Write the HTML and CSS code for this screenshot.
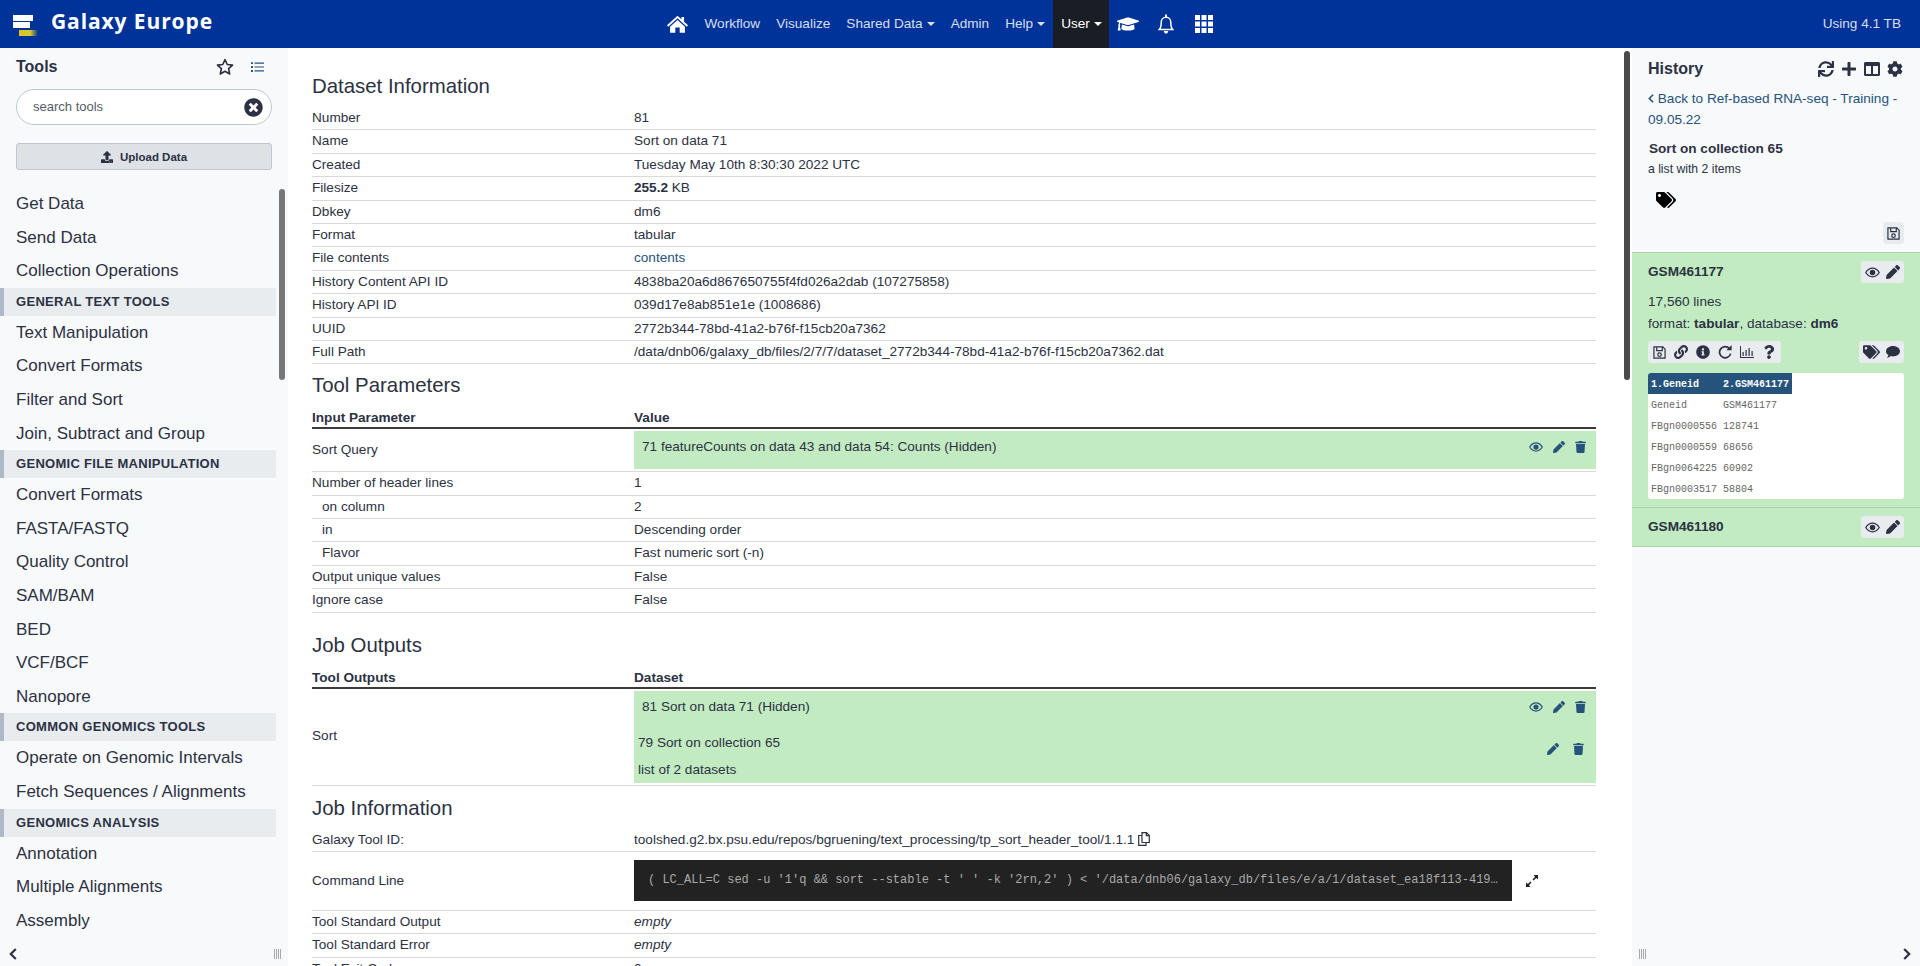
FILE: index.html
```html
<!DOCTYPE html>
<html lang="en">

<head>
    <meta charset="UTF-8">
    <meta name="viewport" content="width=device-width, initial-scale=1.0">
    <title>Galaxy Europe</title>
    <link rel="stylesheet" href="styles.css">
</head>

<body>
    <svg class="sprites" aria-hidden="true">
        <symbol id="i-home" viewBox="0 0 24 20"><path d="M12 0.5 L16.5 4.6 V2 H19.5 V7.3 L24 11.4 L22.6 13 L12 3.5 L1.4 13 L0 11.4 Z M12 5.4 L20.5 13 V20 H14.5 V14 H9.5 V20 H3.5 V13 Z"/></symbol>
        <symbol id="i-cap" viewBox="0 0 640 512"><path d="M622.34 153.2L343.4 67.5c-15.2-4.67-31.6-4.67-46.79 0L17.66 153.2c-23.54 7.23-23.54 38.36 0 45.59l48.63 14.94c-10.67 13.19-17.23 29.28-17.88 46.9C38.78 266.15 32 276.11 32 288c0 10.78 5.68 19.85 13.86 25.65L20.33 428.53C18.11 438.52 25.71 448 35.94 448h56.11c10.24 0 17.84-9.48 15.62-19.47L82.14 313.65C90.32 307.85 96 298.78 96 288c0-11.57-6.47-21.25-15.66-26.87.76-15.02 8.44-28.3 20.69-36.72L296.6 284.5c9.06 2.78 26.44 6.25 46.79 0l278.95-85.7c23.55-7.24 23.55-38.36 0-45.6zM352.79 315.09c-28.53 8.76-52.84 3.92-65.59 0l-145.02-44.55L128 384c0 35.35 85.96 64 192 64s192-28.65 192-64l-14.18-113.47-145.03 44.56z"/></symbol>
        <symbol id="i-bell" viewBox="0 0 16 20"><path fill="none" stroke="currentColor" stroke-width="1.5" d="M1.2 15.6 C3.2 13.6 3.2 11 3.2 8.4 C3.2 5.4 5.2 3.2 8 3.2 C10.8 3.2 12.8 5.4 12.8 8.4 C12.8 11 12.8 13.6 14.8 15.6 Z"/><path d="M7 0.5 H9 V3.5 H7 Z M5.8 17 H10.2 C10.2 18.5 9.2 19.6 8 19.6 C6.8 19.6 5.8 18.5 5.8 17 Z"/></symbol>
        <symbol id="i-grid" viewBox="0 0 18 18"><path d="M0 0H5V5H0Z M6.5 0H11.5V5H6.5Z M13 0H18V5H13Z M0 6.5H5V11.5H0Z M6.5 6.5H11.5V11.5H6.5Z M13 6.5H18V11.5H13Z M0 13H5V18H0Z M6.5 13H11.5V18H6.5Z M13 13H18V18H13Z"/></symbol>
        <symbol id="i-star" viewBox="0 0 20 20"><path fill="none" stroke="currentColor" stroke-width="1.8" stroke-linejoin="round" d="M10 1.8 L12.5 7.2 L18.4 7.9 L14 11.9 L15.2 17.8 L10 14.8 L4.8 17.8 L6 11.9 L1.6 7.9 L7.5 7.2 Z"/></symbol>
        <symbol id="i-list" viewBox="0 0 16 14"><path d="M0 1H2.4V3.4H0Z M0 5.8H2.4V8.2H0Z M0 10.6H2.4V13H0Z M4.4 1.5H16V2.9H4.4Z M4.4 6.3H16V7.7H4.4Z M4.4 11.1H16V12.5H4.4Z"/></symbol>
        <symbol id="i-times" viewBox="0 0 512 512"><path d="M256 8C119 8 8 119 8 256s111 248 248 248 248-111 248-248S393 8 256 8zm121.6 313.1c4.7 4.7 4.7 12.3 0 17L338 377.6c-4.7 4.7-12.3 4.7-17 0L256 312l-65.1 65.6c-4.7 4.7-12.3 4.7-17 0L134.4 338c-4.7-4.7-4.7-12.3 0-17l65.6-65-65.6-65.1c-4.7-4.7-4.7-12.3 0-17l39.6-39.6c4.7-4.7 12.3-4.7 17 0l65 65.7 65.1-65.6c4.7-4.7 12.3-4.7 17 0l39.6 39.6c4.7 4.7 4.7 12.3 0 17L312 256l65.6 65.1z"/></symbol>
        <symbol id="i-upload" viewBox="0 0 512 512"><path d="M296 384h-80c-13.3 0-24-10.7-24-24V192h-87.7c-17.8 0-26.7-21.5-14.1-34.1L242.3 5.7c7.5-7.5 19.8-7.5 27.3 0l152.2 152.2c12.6 12.6 3.7 34.1-14.1 34.1H320v168c0 13.3-10.7 24-24 24zm216-8v112c0 13.3-10.7 24-24 24H24c-13.3 0-24-10.7-24-24V376c0-13.3 10.7-24 24-24h136v8c0 30.9 25.1 56 56 56h80c30.9 0 56-25.1 56-56v-8h136c13.3 0 24 10.7 24 24zm-124 88c0-11-9-20-20-20s-20 9-20 20 9 20 20 20 20-9 20-20zm64 0c0-11-9-20-20-20s-20 9-20 20 9 20 20 20 20-9 20-20z"/></symbol>
        <symbol id="i-eye" viewBox="0 0 20 14"><path fill="none" stroke="currentColor" stroke-width="1.7" d="M1 7 C3.4 3.2 6.5 1.2 10 1.2 C13.5 1.2 16.6 3.2 19 7 C16.6 10.8 13.5 12.8 10 12.8 C6.5 12.8 3.4 10.8 1 7 Z"/><circle cx="10" cy="7" r="3.7"/></symbol>
        <symbol id="i-pencil" viewBox="0 0 512 512"><path d="M497.9 142.1l-46.1 46.1c-4.7 4.7-12.3 4.7-17 0l-111-111c-4.7-4.7-4.7-12.3 0-17l46.1-46.1c18.7-18.7 49.1-18.7 67.9 0l60.1 60.1c18.8 18.7 18.8 49.1 0 67.9zM284.2 99.8L21.6 362.4.4 483.9c-2.9 16.4 11.4 30.6 27.8 27.8l121.5-21.3 262.6-262.6c4.7-4.7 4.7-12.3 0-17l-111-111c-4.8-4.7-12.4-4.7-17.1 0z"/></symbol>
        <symbol id="i-trash" viewBox="0 0 448 512"><path d="M432 32H312l-9.4-18.7A24 24 0 0 0 281.1 0H166.8a23.72 23.72 0 0 0-21.4 13.3L136 32H16A16 16 0 0 0 0 48v32a16 16 0 0 0 16 16h416a16 16 0 0 0 16-16V48a16 16 0 0 0-16-16zM53.2 467a48 48 0 0 0 47.9 45h245.8a48 48 0 0 0 47.9-45L416 128H32z"/></symbol>
        <symbol id="i-sync" viewBox="0 0 512 512"><path d="M440.65 12.57l4 82.77A247.16 247.16 0 0 0 255.83 8C134.73 8 33.91 94.92 12.29 209.82A12 12 0 0 0 24.09 224h49.05a12 12 0 0 0 11.67-9.26 175.91 175.91 0 0 1 317-56.94l-101.46-4.86a12 12 0 0 0-12.57 12v47.41a12 12 0 0 0 12 12H500a12 12 0 0 0 12-12V12a12 12 0 0 0-12-12h-47.37a12 12 0 0 0-11.98 12.57zM255.83 432a175.61 175.61 0 0 1-146-77.8l101.8 4.87a12 12 0 0 0 12.57-12v-47.4a12 12 0 0 0-12-12H12a12 12 0 0 0-12 12V500a12 12 0 0 0 12 12h47.35a12 12 0 0 0 12-12.6l-4.15-82.57A247.17 247.17 0 0 0 255.83 504c121.11 0 221.93-86.92 243.55-201.82a12 12 0 0 0-11.8-14.18h-49.05a12 12 0 0 0-11.67 9.26A175.86 175.86 0 0 1 255.83 432z"/></symbol>
        <symbol id="i-plus" viewBox="0 0 448 512"><path d="M416 208H272V64c0-17.67-14.33-32-32-32h-32c-17.67 0-32 14.33-32 32v144H32c-17.67 0-32 14.33-32 32v32c0 17.67 14.33 32 32 32h144v144c0 17.67 14.33 32 32 32h32c17.67 0 32-14.33 32-32V304h144c17.67 0 32-14.33 32-32v-32c0-17.67-14.33-32-32-32z"/></symbol>
        <symbol id="i-columns" viewBox="0 0 16 14"><path d="M1.5 0H14.5C15.3 0 16 .7 16 1.5V12.5C16 13.3 15.3 14 14.5 14H1.5C.7 14 0 13.3 0 12.5V1.5C0 .7 .7 0 1.5 0Z M2 4V12H7V4Z M9 4V12H14V4Z" fill-rule="evenodd"/></symbol>
        <symbol id="i-cog" viewBox="0 0 512 512"><path d="M487.4 315.7l-42.6-24.6c4.3-23.2 4.3-47 0-70.2l42.6-24.6c4.9-2.8 7.1-8.6 5.5-14-11.1-35.6-30-67.8-54.7-94.6-3.8-4.1-10-5.1-14.8-2.3L380.8 110c-17.9-15.4-38.5-27.3-60.8-35.1V25.8c0-5.6-3.9-10.5-9.4-11.7-36.7-8.2-74.3-7.8-109.2 0-5.5 1.2-9.4 6.1-9.4 11.7V75c-22.2 7.9-42.8 19.8-60.8 35.1L88.7 85.5c-4.9-2.8-11-1.9-14.8 2.3-24.7 26.7-43.6 58.9-54.7 94.6-1.7 5.4.6 11.2 5.5 14L67.3 221c-4.3 23.2-4.3 47 0 70.2l-42.6 24.6c-4.9 2.8-7.1 8.6-5.5 14 11.1 35.6 30 67.8 54.7 94.6 3.8 4.1 10 5.1 14.8 2.3l42.6-24.6c17.9 15.4 38.5 27.3 60.8 35.1v49.2c0 5.6 3.9 10.5 9.4 11.7 36.7 8.2 74.3 7.8 109.2 0 5.5-1.2 9.4-6.1 9.4-11.7v-49.2c22.2-7.9 42.8-19.8 60.8-35.1l42.6 24.6c4.9 2.8 11 1.9 14.8-2.3 24.7-26.7 43.6-58.9 54.7-94.6 1.5-5.5-.7-11.3-5.6-14.1zM256 336c-44.1 0-80-35.9-80-80s35.9-80 80-80 80 35.9 80 80-35.9 80-80 80z"/></symbol>
        <symbol id="i-tags" viewBox="0 0 640 512"><path d="M497.941 225.941L286.059 14.059A48 48 0 0 0 252.118 0H48C21.49 0 0 21.49 0 48v204.118a48 48 0 0 0 14.059 33.941l211.882 211.882c18.744 18.745 49.136 18.746 67.882 0l204.118-204.118c18.745-18.745 18.745-49.137 0-67.882zM112 160c-26.51 0-48-21.49-48-48s21.49-48 48-48 48 21.49 48 48-21.49 48-48 48zm513.941 133.823L421.823 497.941c-18.745 18.745-49.137 18.745-67.882 0l-.36-.36L527.64 323.522c16.999-16.999 26.36-39.6 26.36-63.64s-9.362-46.641-26.36-63.64L331.397 0h48.721a48 48 0 0 1 33.941 14.059l211.882 211.882c18.745 18.745 18.745 49.137 0 67.882z"/></symbol>
        <symbol id="i-save" viewBox="0 0 14 14"><path fill="none" stroke="currentColor" stroke-width="1.3" d="M1 1 H10.6 L13 3.4 V13 H1 Z M4 1 V5 H10 V1"/><circle cx="7" cy="9.4" r="1.9" fill="none" stroke="currentColor" stroke-width="1.3"/></symbol>
        <symbol id="i-link" viewBox="0 0 512 512"><path d="M326.612 185.391c59.747 59.809 58.927 155.698.36 214.59-.11.12-.24.25-.36.37l-67.2 67.2c-59.27 59.27-155.699 59.262-214.96 0-59.27-59.26-59.27-155.7 0-214.96l37.106-37.106c9.84-9.84 26.786-3.3 27.294 10.606.648 17.722 3.826 35.527 9.69 52.721 1.986 5.822.567 12.262-3.783 16.612l-13.087 13.087c-28.026 28.026-28.905 73.66-1.155 101.96 28.024 28.579 74.086 28.749 102.325.51l67.2-67.19c28.191-28.191 28.073-73.757 0-101.83-3.701-3.694-7.429-6.564-10.341-8.569a16.037 16.037 0 0 1-6.947-12.606c-.396-10.567 3.348-21.456 11.698-29.806l21.054-21.055c5.521-5.521 14.182-6.199 20.584-1.731a152.482 152.482 0 0 1 20.522 17.197zM467.547 44.449c-59.261-59.262-155.69-59.27-214.96 0l-67.2 67.2c-.12.12-.25.25-.36.37-58.566 58.892-59.387 154.781.36 214.59a152.454 152.454 0 0 0 20.521 17.196c6.402 4.468 15.064 3.789 20.584-1.731l21.054-21.055c8.35-8.35 12.094-19.239 11.698-29.806a16.037 16.037 0 0 0-6.947-12.606c-2.912-2.005-6.64-4.875-10.341-8.569-28.073-28.073-28.191-73.639 0-101.83l67.2-67.19c28.239-28.239 74.3-28.069 102.325.51 27.75 28.3 26.872 73.934-1.155 101.96l-13.087 13.087c-4.35 4.35-5.769 10.79-3.783 16.612 5.864 17.194 9.042 34.999 9.69 52.721.509 13.906 17.454 20.446 27.294 10.606l37.106-37.106c59.271-59.259 59.271-155.699.001-214.959z"/></symbol>
        <symbol id="i-info" viewBox="0 0 512 512"><path d="M256 8C119.043 8 8 119.083 8 256c0 136.997 111.043 248 248 248s248-111.003 248-248C504 119.083 392.957 8 256 8zm0 110c23.196 0 42 18.804 42 42s-18.804 42-42 42-42-18.804-42-42 18.804-42 42-42zm56 254c0 6.627-5.373 12-12 12h-88c-6.627 0-12-5.373-12-12v-24c0-6.627 5.373-12 12-12h12v-64h-12c-6.627 0-12-5.373-12-12v-24c0-6.627 5.373-12 12-12h64c6.627 0 12 5.373 12 12v100h12c6.627 0 12 5.373 12 12v24z"/></symbol>
        <symbol id="i-redo" viewBox="0 0 14 14"><path fill="none" stroke="currentColor" stroke-width="1.7" d="M11.4 3.6 A5.6 5.6 0 1 0 12.6 8.6"/><path d="M8.4 5.2 H13.6 V0 Z"/></symbol>
        <symbol id="i-chart" viewBox="0 0 14 12"><path d="M0 0H1V11H14V12H0Z M2.5 6H3.7V10H2.5Z M5.5 4H6.7V10H5.5Z M8.5 2H9.7V10H8.5Z M11.5 5H12.7V10H11.5Z"/></symbol>
        <symbol id="i-question" viewBox="0 0 384 512"><path d="M202.021 0C122.202 0 70.503 32.703 29.914 91.026c-7.363 10.58-5.093 25.086 5.178 32.874l43.138 32.709c10.373 7.865 25.132 6.026 33.253-4.148 25.049-31.381 43.63-49.449 82.757-49.449 30.764 0 68.816 19.799 68.816 49.631 0 22.552-18.617 34.134-48.993 51.164-35.423 19.86-82.299 44.576-82.299 106.405V320c0 13.255 10.745 24 24 24h72.471c13.255 0 24-10.745 24-24v-5.773c0-42.86 125.268-44.645 125.268-160.627C377.504 66.256 286.902 0 202.021 0zM192 373.459c-38.196 0-69.271 31.075-69.271 69.271 0 38.195 31.075 69.27 69.271 69.27s69.271-31.075 69.271-69.271-31.075-69.27-69.271-69.27z"/></symbol>
        <symbol id="i-comment" viewBox="0 0 14 12"><path d="M7 0C10.9 0 14 2.3 14 5.2C14 8.1 10.9 10.4 7 10.4C6.2 10.4 5.4 10.3 4.7 10.1C3.7 11 2.4 11.7 .8 11.9C1.6 11 2.2 10 2.4 9.1C.9 8.1 0 6.8 0 5.2C0 2.3 3.1 0 7 0Z"/></symbol>
        <symbol id="i-copy" viewBox="0 0 12 14"><path fill="none" stroke="currentColor" stroke-width="1.2" d="M4 .7 H8.5 L11.3 3.5 V10.5 H4 Z M8.3 .7 V3.7 H11.3 M4 3.5 H.7 V13.3 H8 V10.5"/></symbol>
        <symbol id="i-expand" viewBox="0 0 12 12"><path d="M7.5 0H12V4.5L10.2 2.9L7.6 5.5L6.5 4.4L9.1 1.8Z M4.5 12H0V7.5L1.8 9.1L4.4 6.5L5.5 7.6L2.9 10.2Z"/></symbol>
        <symbol id="i-left" viewBox="0 0 8 12"><path fill="none" stroke="currentColor" stroke-width="2.2" d="M6.8 1 L1.8 6 L6.8 11"/></symbol>
        <symbol id="i-right" viewBox="0 0 8 12"><path fill="none" stroke="currentColor" stroke-width="2.2" d="M1.2 1 L6.2 6 L1.2 11"/></symbol>
    </svg>

    <header class="masthead">
        <a class="brand" href="#">
            <span class="logo"><span class="logo-a"></span><span class="logo-b"></span><span class="logo-c"></span></span>
            <span class="brand-name">Galaxy Europe</span>
        </a>
        <nav class="nav">
            <a class="nav-home" href="#"><svg class="ic-home"><use href="#i-home"/></svg></a>
            <a href="#">Workflow</a>
            <a href="#">Visualize</a>
            <a class="caret" href="#">Shared Data</a>
            <a href="#">Admin</a>
            <a class="caret" href="#">Help</a>
            <a class="caret active" href="#">User</a>
            <a class="nav-icon" href="#"><svg class="ic-cap"><use href="#i-cap"/></svg></a>
            <a class="nav-icon" href="#"><svg class="ic-bell"><use href="#i-bell"/></svg></a>
            <a class="nav-icon" href="#"><svg class="ic-grid"><use href="#i-grid"/></svg></a>
        </nav>
        <div class="quota">Using 4.1 TB</div>
    </header>

    <div class="layout">
        <aside class="tools">
            <div class="tools-head">
                <span class="tools-title">Tools</span>
                <span class="tools-actions">
                    <svg class="ic-star"><use href="#i-star"/></svg>
                    <svg class="ic-list"><use href="#i-list"/></svg>
                </span>
            </div>
            <div class="search">
                <span>search tools</span>
                <svg class="ic-times"><use href="#i-times"/></svg>
            </div>
            <button class="upload"><svg class="ic-upload"><use href="#i-upload"/></svg>Upload Data</button>
            <ul class="tool-list">
                <li>Get Data</li>
                <li>Send Data</li>
                <li>Collection Operations</li>
                <li class="section">General Text Tools</li>
                <li>Text Manipulation</li>
                <li>Convert Formats</li>
                <li>Filter and Sort</li>
                <li>Join, Subtract and Group</li>
                <li class="section">Genomic File Manipulation</li>
                <li>Convert Formats</li>
                <li>FASTA/FASTQ</li>
                <li>Quality Control</li>
                <li>SAM/BAM</li>
                <li>BED</li>
                <li>VCF/BCF</li>
                <li>Nanopore</li>
                <li class="section">Common Genomics Tools</li>
                <li>Operate on Genomic Intervals</li>
                <li>Fetch Sequences / Alignments</li>
                <li class="section">Genomics Analysis</li>
                <li>Annotation</li>
                <li>Multiple Alignments</li>
                <li>Assembly</li>
            </ul>
            <div class="scroll-thumb tools-thumb"></div>
            <div class="panel-foot">
                <svg class="ic-chev"><use href="#i-left"/></svg>
                <span class="drag"></span>
            </div>
        </aside>

        <main class="center">
            <h3>Dataset Information</h3>
            <table class="info">
                <tr><td>Number</td><td>81</td></tr>
                <tr><td>Name</td><td>Sort on data 71</td></tr>
                <tr><td>Created</td><td>Tuesday May 10th 8:30:30 2022 UTC</td></tr>
                <tr><td>Filesize</td><td><b>255.2</b> KB</td></tr>
                <tr><td>Dbkey</td><td>dm6</td></tr>
                <tr><td>Format</td><td>tabular</td></tr>
                <tr><td>File contents</td><td><a href="#">contents</a></td></tr>
                <tr><td>History Content API ID</td><td>4838ba20a6d867650755f4fd026a2dab (107275858)</td></tr>
                <tr><td>History API ID</td><td>039d17e8ab851e1e (1008686)</td></tr>
                <tr><td>UUID</td><td>2772b344-78bd-41a2-b76f-f15cb20a7362</td></tr>
                <tr><td>Full Path</td><td>/data/dnb06/galaxy_db/files/2/7/7/dataset_2772b344-78bd-41a2-b76f-f15cb20a7362.dat</td></tr>
            </table>

            <h3>Tool Parameters</h3>
            <table class="info">
                <thead><tr><th>Input Parameter</th><th>Value</th></tr></thead>
                <tr>
                    <td>Sort Query</td>
                    <td class="cell-green">
                        <div class="green-box query-box">
                            <span>71 featureCounts on data 43 and data 54: Counts (Hidden)</span>
                            <span class="row-icons">
                                <svg class="ic-eye"><use href="#i-eye"/></svg>
                                <svg class="ic-pencil"><use href="#i-pencil"/></svg>
                                <svg class="ic-trash"><use href="#i-trash"/></svg>
                            </span>
                        </div>
                    </td>
                </tr>
                <tr><td>Number of header lines</td><td>1</td></tr>
                <tr><td class="indent">on column</td><td>2</td></tr>
                <tr><td class="indent">in</td><td>Descending order</td></tr>
                <tr><td class="indent">Flavor</td><td>Fast numeric sort (-n)</td></tr>
                <tr><td>Output unique values</td><td>False</td></tr>
                <tr><td>Ignore case</td><td>False</td></tr>
            </table>

            <h3 class="gap-top">Job Outputs</h3>
            <table class="info">
                <thead><tr><th>Tool Outputs</th><th>Dataset</th></tr></thead>
                <tr>
                    <td>Sort</td>
                    <td class="cell-green">
                        <div class="green-box outputs-box">
                            <div class="output-row">
                                <span>81 Sort on data 71 (Hidden)</span>
                                <span class="row-icons">
                                    <svg class="ic-eye"><use href="#i-eye"/></svg>
                                    <svg class="ic-pencil"><use href="#i-pencil"/></svg>
                                    <svg class="ic-trash"><use href="#i-trash"/></svg>
                                </span>
                            </div>
                            <div class="output-row second">
                                <span>79 Sort on collection 65</span>
                                <span class="row-icons wide">
                                    <svg class="ic-pencil"><use href="#i-pencil"/></svg>
                                    <svg class="ic-trash"><use href="#i-trash"/></svg>
                                </span>
                            </div>
                            <div class="output-note">list of 2 datasets</div>
                        </div>
                    </td>
                </tr>
            </table>

            <h3 class="gap-info">Job Information</h3>
            <table class="info">
                <tr><td>Galaxy Tool ID:</td><td>toolshed.g2.bx.psu.edu/repos/bgruening/text_processing/tp_sort_header_tool/1.1.1 <svg class="ic-copy"><use href="#i-copy"/></svg></td></tr>
                <tr>
                    <td>Command Line</td>
                    <td>
                        <div class="command">
                            <pre>( LC_ALL=C sed -u '1'q &amp;&amp; sort --stable -t ' ' -k '2rn,2' ) &lt; '/data/dnb06/galaxy_db/files/e/a/1/dataset_ea18f113-419…</pre>
                            <svg class="ic-expand"><use href="#i-expand"/></svg>
                        </div>
                    </td>
                </tr>
                <tr><td>Tool Standard Output</td><td><i>empty</i></td></tr>
                <tr><td>Tool Standard Error</td><td><i>empty</i></td></tr>
                <tr><td>Tool Exit Code</td><td>0</td></tr>
            </table>
            <div class="scroll-thumb center-thumb"></div>
        </main>

        <aside class="history">
            <div class="history-head">
                <span class="history-title">History</span>
                <span class="history-actions">
                    <svg class="ic-sync"><use href="#i-sync"/></svg>
                    <svg class="ic-plus"><use href="#i-plus"/></svg>
                    <svg class="ic-columns"><use href="#i-columns"/></svg>
                    <svg class="ic-cog"><use href="#i-cog"/></svg>
                </span>
            </div>
            <a class="back" href="#"><svg class="ic-back"><use href="#i-left"/></svg> Back to Ref-based RNA-seq - Training - 09.05.22</a>
            <div class="coll-name">Sort on collection 65</div>
            <div class="coll-sub">a list with 2 items</div>
            <svg class="ic-tags-big"><use href="#i-tags"/></svg>
            <div class="save-row"><span class="btn-group"><svg class="ic-save"><use href="#i-save"/></svg></span></div>

            <div class="dataset open">
                <div class="dataset-head">
                    <b>GSM461177</b>
                    <span class="btn-group">
                        <svg class="ic-eye-h"><use href="#i-eye"/></svg>
                        <svg class="ic-pencil-h"><use href="#i-pencil"/></svg>
                    </span>
                </div>
                <div class="dataset-meta">17,560 lines</div>
                <div class="dataset-meta">format: <b>tabular</b>, database: <b>dm6</b></div>
                <div class="dataset-actions">
                    <span class="btn-group wide">
                        <svg class="ic-save"><use href="#i-save"/></svg>
                        <svg class="ic-act"><use href="#i-link"/></svg>
                        <svg class="ic-act"><use href="#i-info"/></svg>
                        <svg class="ic-act"><use href="#i-redo"/></svg>
                        <svg class="ic-act"><use href="#i-chart"/></svg>
                        <svg class="ic-act"><use href="#i-question"/></svg>
                    </span>
                    <span class="btn-group">
                        <svg class="ic-tags"><use href="#i-tags"/></svg>
                        <svg class="ic-act"><use href="#i-comment"/></svg>
                    </span>
                </div>
                <div class="peek">
                    <table>
                        <tr><th>1.Geneid</th><th>2.GSM461177</th></tr>
                        <tr><td>Geneid</td><td>GSM461177</td></tr>
                        <tr><td>FBgn0000556</td><td>128741</td></tr>
                        <tr><td>FBgn0000559</td><td>68656</td></tr>
                        <tr><td>FBgn0064225</td><td>60902</td></tr>
                        <tr><td>FBgn0003517</td><td>58804</td></tr>
                    </table>
                </div>
            </div>
            <div class="dataset">
                <div class="dataset-head">
                    <b>GSM461180</b>
                    <span class="btn-group">
                        <svg class="ic-eye-h"><use href="#i-eye"/></svg>
                        <svg class="ic-pencil-h"><use href="#i-pencil"/></svg>
                    </span>
                </div>
            </div>
            <div class="panel-foot">
                <span class="drag"></span>
                <svg class="ic-chev"><use href="#i-right"/></svg>
            </div>
        </aside>
    </div>
</body>

</html>
```

FILE: styles.css
```css
* {
    box-sizing: border-box;
}

html,
body {
    margin: 0;
    padding: 0;
    height: 966px;
    overflow: hidden;
}

body {
    font-family: "Liberation Sans", Arial, sans-serif;
    font-size: 13.6px;
    line-height: 1.5;
    color: #2c3143;
    background-color: #fff;
}

a {
    color: #25537b;
    text-decoration: none;
}

svg {
    fill: currentColor;
}

.sprites {
    display: none;
}

/* masthead */
.masthead {
    display: flex;
    align-items: stretch;
    height: 48px;
    background-color: #003399;
    color: #fff;
}

.brand {
    display: flex;
    align-items: center;
    width: 656px;
    flex: none;
    padding-left: 13px;
    color: #fff;
}

.logo {
    display: flex;
    flex-direction: column;
    gap: 2px;
    width: 26px;
    margin: 2px 12px 0 0;
}

.logo-a {
    width: 20px;
    height: 6px;
    background-color: #fff;
}

.logo-b {
    width: 17px;
    height: 6px;
    margin-top: -1px;
    background-color: #fff;
}

.logo-c {
    width: 19px;
    height: 6px;
    margin-left: 6px;
    background: linear-gradient(90deg, #d8c52a, #d8c52a 60%, #003399);
}

.brand-name {
    margin-bottom: 4px;
    font-family: "Open Sans", sans-serif;
    font-size: 21px;
    font-weight: 700;
    letter-spacing: 0.9px;
}

.nav {
    display: flex;
    align-items: stretch;
}

.nav a {
    display: flex;
    align-items: center;
    padding: 0 8px;
    color: rgba(255, 255, 255, 0.85);
}

.nav a.active {
    padding-right: 7px;
    background-color: #1b1d25;
    color: #fff;
}

.nav .caret::after {
    content: "";
    margin-left: 4px;
    border-top: 4px solid;
    border-left: 4px solid transparent;
    border-right: 4px solid transparent;
}

.nav .nav-home {
    padding: 0 8.5px 0 11px;
    color: #fff;
}

.nav .nav-icon {
    justify-content: center;
    width: 38px;
    color: #fff;
}

.ic-home {
    width: 21px;
    height: 18px;
}

.ic-cap {
    width: 23px;
    height: 18px;
}

.ic-bell {
    width: 16px;
    height: 20px;
}

.ic-grid {
    width: 18px;
    height: 18px;
}

.quota {
    display: flex;
    align-items: center;
    margin-left: auto;
    padding-right: 19px;
    color: rgba(255, 255, 255, 0.85);
}

/* three panels */
.layout {
    display: flex;
    height: 918px;
}

.tools,
.history {
    position: relative;
    flex: none;
    background-color: #f8f9fb;
}

.tools {
    width: 288px;
    padding-top: 7px;
    overflow: hidden;
}

.tools-head {
    display: flex;
    align-items: center;
    justify-content: space-between;
    height: 24px;
    padding: 0 24px 0 16px;
}

.tools-title {
    font-size: 16px;
    font-weight: 700;
}

.tools-actions {
    display: flex;
    align-items: center;
    gap: 17px;
}

.ic-star {
    width: 18px;
    height: 18px;
}

.ic-list {
    width: 13px;
    height: 12px;
    color: #25537b;
}

.search {
    display: flex;
    align-items: center;
    justify-content: space-between;
    width: 256px;
    height: 36px;
    margin: 10px 0 0 16px;
    padding: 0 8px 0 16px;
    border: 1px solid #bfc6d2;
    border-radius: 18px;
    background-color: #fff;
    color: #545b6b;
    font-size: 13px;
}

.ic-times {
    width: 19px;
    height: 19px;
    color: #2c3143;
}

.upload {
    display: flex;
    align-items: center;
    justify-content: center;
    width: 256px;
    height: 27px;
    margin: 18px 0 0 16px;
    padding: 0;
    border: 1px solid #bfc6d2;
    border-radius: 3px;
    background-color: #dee2e6;
    color: #2c3143;
    font-family: inherit;
    font-size: 11.5px;
    font-weight: 700;
}

.ic-upload {
    width: 12px;
    height: 12px;
    margin-right: 7px;
}

.tool-list {
    margin: 17px 0 0;
    padding: 0;
    list-style: none;
}

.tool-list li {
    height: 33.6px;
    padding-left: 16px;
    font-size: 17px;
    line-height: 33.6px;
}

.tool-list .section {
    width: 276px;
    height: 28px;
    padding-left: 12px;
    border-left: 4px solid #aeb8c7;
    background-color: #e9ecef;
    font-size: 13px;
    font-weight: 700;
    line-height: 28px;
    text-transform: uppercase;
    letter-spacing: 0.3px;
}

.scroll-thumb {
    position: absolute;
    width: 6px;
    border-radius: 3px;
}

.tools-thumb {
    top: 141px;
    left: 279px;
    height: 191px;
    background-color: #777;
}

.center-thumb {
    top: 3px;
    right: 2px;
    height: 329px;
    background-color: #4a4a4a;
}

.panel-foot {
    position: absolute;
    left: 0;
    right: 0;
    bottom: 0;
    display: flex;
    align-items: center;
    justify-content: space-between;
    height: 24px;
    padding: 0 6px 0 9px;
    background-color: #f8f9fb;
}

.ic-chev {
    width: 8px;
    height: 12px;
}

.drag {
    width: 8px;
    height: 10px;
    background: repeating-linear-gradient(90deg, #aaa 0, #aaa 1px, transparent 1px, transparent 2px);
}

.history .panel-foot {
    padding: 0 9px 0 7px;
}

/* centre column */
.center {
    position: relative;
    flex: 1;
    min-width: 0;
    padding: 26px 36px 0 24px;
    overflow: hidden;
}

h3 {
    margin: 0 0 9px;
    font-size: 20.4px;
    font-weight: 400;
    line-height: 24px;
}

.gap-top {
    margin-top: 20px;
}

.gap-info {
    margin-top: 10px;
}

.info {
    width: 100%;
    margin-bottom: 9px;
    border-collapse: collapse;
    table-layout: fixed;
}

.info th,
.info td {
    padding: 1px 0;
    border-bottom: 1px solid #d9d9d9;
    text-align: left;
    vertical-align: middle;
}

.info th {
    padding: 3px 0 0;
    border-bottom: 2px solid #3b3b3b;
    font-weight: 700;
    line-height: 18px;
}

.info th:first-child,
.info td:first-child {
    width: 322px;
}

.info .indent {
    padding-left: 10px;
}

.info a {
    color: #25537b;
}

.info .cell-green {
    padding: 2px 0;
}

.green-box {
    background-color: #c2ebc2;
}

.query-box {
    display: flex;
    justify-content: space-between;
    height: 38px;
    padding: 6px 10px 0 8px;
}

.row-icons {
    display: flex;
    align-items: center;
    gap: 10px;
    height: 20px;
    color: #25537b;
}

.row-icons.wide {
    gap: 14px;
    margin-right: 2px;
}

.ic-eye {
    width: 14px;
    height: 10px;
}

.ic-pencil {
    width: 12px;
    height: 12px;
}

.ic-trash {
    width: 11px;
    height: 12px;
}

.outputs-box {
    height: 92px;
    padding: 6px 10px 0 8px;
}

.output-row {
    display: flex;
    justify-content: space-between;
    height: 20px;
}

.output-row.second {
    margin: 16px 0 0 -4px;
}

.output-row.second .row-icons {
    margin-top: 6px;
}

.output-note {
    margin: 7px 0 0 -4px;
}

.ic-copy {
    width: 12px;
    height: 14px;
    vertical-align: -2px;
}

.command {
    display: flex;
    align-items: center;
    gap: 14px;
    margin: 7px 0 8px;
}

.command pre {
    width: 878px;
    height: 41px;
    margin: 0;
    padding: 0 14px;
    overflow: hidden;
    background-color: #222;
    color: #aaa;
    font-family: "Liberation Mono", monospace;
    font-size: 12px;
    line-height: 41px;
    white-space: pre;
}

.ic-expand {
    width: 12px;
    height: 12px;
    color: #222;
}

/* history */
.history {
    width: 288px;
    padding-top: 9px;
    overflow: hidden;
}

.history-head {
    display: flex;
    align-items: center;
    justify-content: space-between;
    height: 24px;
    padding: 0 17px 0 16px;
}

.history-title {
    font-size: 16px;
    font-weight: 700;
}

.history-actions {
    display: flex;
    align-items: center;
    gap: 7px;
}

.history-actions svg {
    width: 16px;
    height: 16px;
}

.back {
    display: block;
    margin: 7px 16px 0;
    line-height: 21px;
}

.ic-back {
    width: 6px;
    height: 9px;
}

.coll-name {
    margin: 9px 0 0 17px;
    font-weight: 700;
}

.coll-sub {
    margin: 1px 0 0 16px;
    font-size: 12.2px;
    line-height: 18px;
}

.ic-tags-big {
    display: block;
    width: 20px;
    height: 16px;
    margin: 14px 0 0 24px;
    color: #000;
}

.save-row {
    display: flex;
    justify-content: flex-end;
    height: 22px;
    margin: 14px 16px 0 0;
}

.btn-group {
    display: inline-flex;
    align-items: center;
    gap: 6px;
    height: 22px;
    padding: 0 4px;
    border-radius: 3px;
    background-color: #e9ecef;
}

.btn-group.wide {
    gap: 8px;
    padding: 0 5px;
}

.ic-save {
    width: 13px;
    height: 13px;
}

.dataset {
    margin-top: 8px;
    padding: 8px 16px;
    border-top: 1px solid #a9d3a9;
    border-bottom: 1px solid #a9d3a9;
    background-color: #c2ebc2;
}

.dataset + .dataset {
    margin-top: 0;
    border-top: 0;
}

.dataset-head {
    display: flex;
    align-items: center;
    justify-content: space-between;
    height: 22px;
}

.ic-eye-h {
    width: 15px;
    height: 11px;
}

.ic-pencil-h {
    width: 14px;
    height: 14px;
}

.dataset-meta {
    line-height: 22px;
}

.dataset-head + .dataset-meta {
    margin-top: 8px;
}

.dataset-actions {
    display: flex;
    justify-content: space-between;
    margin-top: 6px;
}

.ic-act {
    width: 14px;
    height: 14px;
}

.ic-tags {
    width: 17px;
    height: 14px;
}

.peek {
    height: 126px;
    margin-top: 10px;
    border-radius: 3px;
    overflow: hidden;
    background-color: #fff;
}

.peek table {
    border-collapse: collapse;
    font-family: "Liberation Mono", monospace;
    font-size: 10px;
    color: #666;
}

.peek th,
.peek td {
    height: 21px;
    padding: 1px 3px 0;
    font-weight: 400;
    text-align: left;
}

.peek th {
    background-color: #25537b;
    color: #fff;
    font-weight: 700;
}
```
